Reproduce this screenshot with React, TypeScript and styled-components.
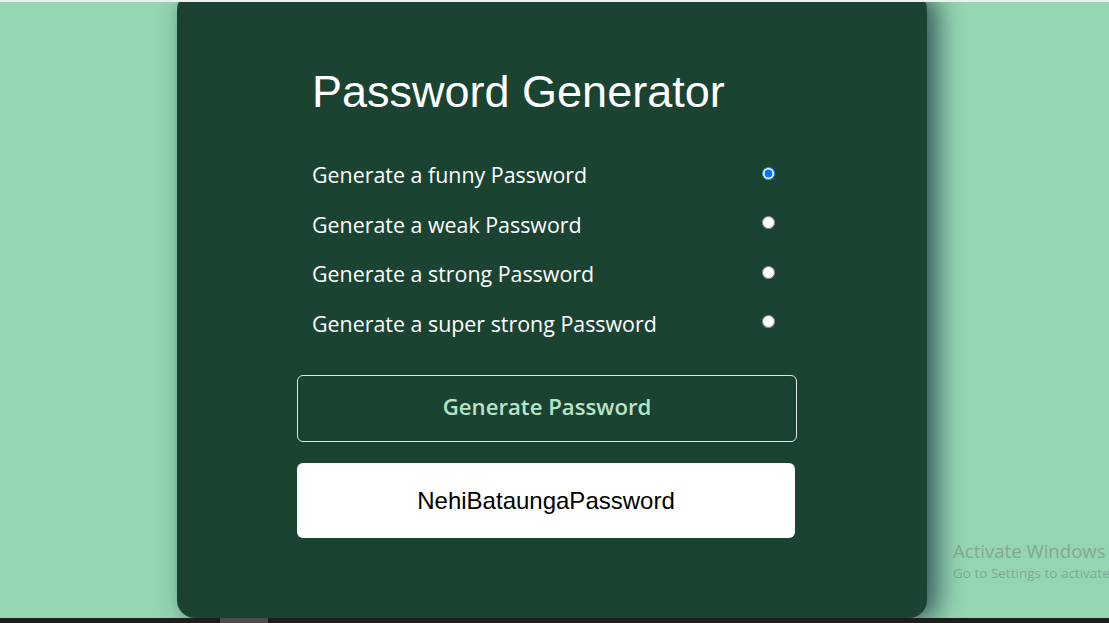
import React from 'react';
import styled, { createGlobalStyle } from 'styled-components';

const GlobalStyle = createGlobalStyle`
  html, body {
    margin: 0;
    padding: 0;
    overflow: hidden;
  }
`;

const options = [
  'Generate a funny Password',
  'Generate a weak Password',
  'Generate a strong Password',
  'Generate a super strong Password',
];

const App: React.FC = () => {
  return (
    <Page>
      <GlobalStyle />
      <TopStrip />
      <Stage>
        <Card>
          <Content>
            <Title>Password Generator</Title>
            <OptionList>
              {options.map((label, i) => (
                <OptionRow key={label}>
                  <OptionLabel htmlFor={`opt-${i}`}>{label}</OptionLabel>
                  <Radio id={`opt-${i}`} type="radio" name="strength" defaultChecked={i === 0} />
                </OptionRow>
              ))}
            </OptionList>
            <GenerateButton>Generate Password</GenerateButton>
            <Output>NehiBataungaPassword</Output>
          </Content>
        </Card>
        <Watermark>
          <WatermarkTitle>Activate Windows</WatermarkTitle>
          <WatermarkText>Go to Settings to activate Windows.</WatermarkText>
        </Watermark>
      </Stage>
      <ScrollTrack>
        <ScrollThumb />
      </ScrollTrack>
    </Page>
  );
};

export default App;

const Page = styled.div`
  display: flex;
  flex-direction: column;
  width: 1109px;
  height: 623px;
  overflow: hidden;
`;

const TopStrip = styled.div`
  height: 2px;
  background: #eef0ef;
  flex-shrink: 0;
  position: relative;
  z-index: 2;
`;

const Stage = styled.div`
  position: relative;
  flex: 1;
  display: flex;
  align-items: flex-start;
  padding-left: 177px;
  background: #95d5b2;
  overflow: hidden;
`;

const Card = styled.div`
  width: 750px;
  height: 626px;
  margin-top: -10px;
  box-sizing: border-box;
  padding: 74px 0 0 120px;
  background: #1b4332;
  border-radius: 18px;
  box-shadow: 10px 2px 26px rgba(10, 30, 50, 0.7);
`;

const Content = styled.div`
  display: flex;
  flex-direction: column;
  width: 500px;
`;

const Title = styled.h1`
  margin: 0 0 0 15px;
  font-family: 'Liberation Sans', Arial, sans-serif;
  font-weight: 400;
  font-size: 45px;
  color: #ffffff;
`;

const OptionList = styled.div`
  display: flex;
  flex-direction: column;
  margin: 33px 19px 26px 15px;
`;

const OptionRow = styled.div`
  display: flex;
  align-items: center;
  justify-content: space-between;
  height: 49.5px;
`;

const OptionLabel = styled.label`
  font-family: 'Open Sans', 'Noto Sans', sans-serif;
  font-size: 21.4px;
  line-height: 27px;
  padding-bottom: 2px;
  color: #ffffff;
`;

const Radio = styled.input`
  width: 13px;
  height: 13px;
  margin: 0 3px 5px 0;
`;

const GenerateButton = styled.button`
  height: 67px;
  width: 500px;
  padding: 0 0 5px;
  border: 1px solid #e4e4e4;
  border-radius: 6px;
  background: transparent;
  color: #b7e4c7;
  font-family: 'Open Sans', 'Noto Sans', sans-serif;
  font-weight: 600;
  font-size: 22.2px;
  cursor: pointer;
`;

const Output = styled.div`
  display: flex;
  align-items: center;
  justify-content: center;
  width: 498px;
  height: 75px;
  margin-top: 21px;
  border-radius: 6px;
  background: #ffffff;
  color: #000000;
  font-family: 'Liberation Sans', Arial, sans-serif;
  font-size: 24px;
`;

const Watermark = styled.div`
  position: absolute;
  left: 953px;
  top: 537px;
  white-space: nowrap;
  font-family: 'Open Sans', 'Noto Sans', sans-serif;
  color: rgba(110, 130, 120, 0.55);
`;

const WatermarkTitle = styled.div`
  font-size: 18.6px;
  line-height: 24px;
`;

const WatermarkText = styled.div`
  font-size: 13.5px;
  line-height: 20px;
`;

const ScrollTrack = styled.div`
  height: 5px;
  flex-shrink: 0;
  background: #1e1e1e;
  display: flex;
`;

const ScrollThumb = styled.div`
  width: 48px;
  margin-left: 220px;
  background: #4d4d4d;
`;
